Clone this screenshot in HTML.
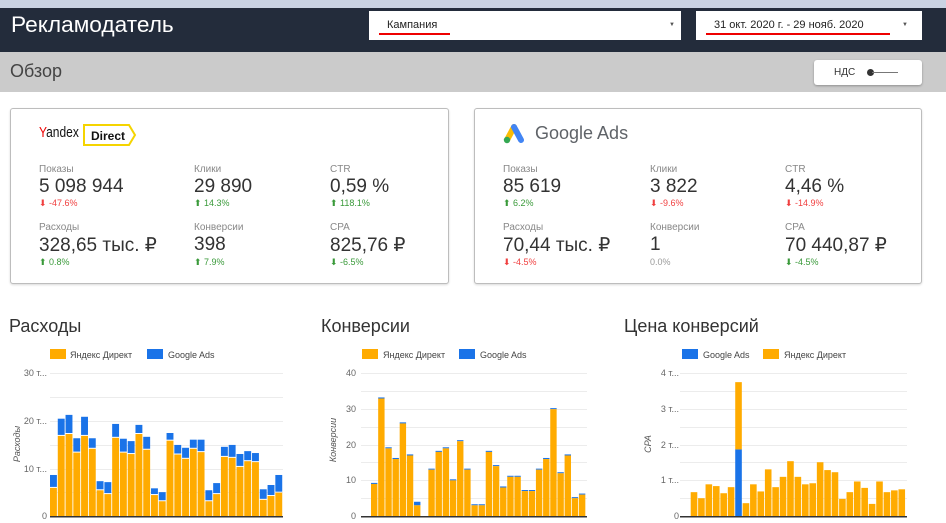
<!DOCTYPE html>
<html><head><meta charset="utf-8"><style>
*{margin:0;padding:0;box-sizing:border-box}
body{width:946px;height:523px;overflow:hidden;background:#fff;font-family:"Liberation Sans",sans-serif;position:relative;color:#333}
.abs{position:absolute}
.top{left:0;top:0;width:946px;height:8px;background:#c9d2e2}
.nav{left:0;top:8px;width:946px;height:44px;background:#232c3b}
.title{left:11px;top:12px;font-size:22px;color:#fff;transform:scaleX(1.03);transform-origin:left}
.dd{background:#fff;height:29px;top:11px;font-size:11px;color:#222}
.sub{left:0;top:52px;width:946px;height:40px;background:#cbcbcb}
.card{border:1px solid #bdbdbd;border-radius:3px;background:#fff;box-shadow:0 1px 2px rgba(0,0,0,.15)}
.lbl{font-size:10px;color:#888}
.val{font-size:19px;color:#333}
.ch{font-size:9px}
.up{color:#3a9a3a}.dn{color:#f04040}.nz{color:#999}
.ct{font-size:18px;color:#333;top:316px}
</style></head><body>
<div class="abs top"></div>
<div class="abs nav"></div>
<div class="abs title">Рекламодатель</div>
<div class="abs dd" style="left:369px;width:312px"><span class="abs" style="left:18px;top:8px">Кампания</span><div class="abs" style="left:10px;top:22px;width:71px;height:2px;background:#e00"></div><span class="abs" style="right:6px;top:11px;font-size:6px;color:#555">▼</span></div>
<div class="abs dd" style="left:696px;width:226px"><span class="abs" style="left:18px;top:8px">31 окт. 2020 г. - 29 нояб. 2020</span><div class="abs" style="left:10px;top:22px;width:184px;height:2px;background:#e00"></div><span class="abs" style="right:14px;top:11px;font-size:6px;color:#555">▼</span></div>
<div class="abs sub"></div>
<div class="abs" style="left:10px;top:61px;font-size:18px;color:#444">Обзор</div>
<div class="abs" style="left:814px;top:60px;width:108px;height:25px;background:#fff;border-radius:3px;box-shadow:0 1px 2px rgba(0,0,0,.3)"><span class="abs" style="left:20px;top:7px;font-size:10px;color:#333">НДС</span><div class="abs" style="left:53px;top:9px;width:7px;height:7px;border-radius:50%;background:#333"></div><div class="abs" style="left:58px;top:12px;width:26px;height:1px;background:#777"></div></div>

<div class="abs card" style="left:10px;top:108px;width:439px;height:176px">
 <div class="abs" style="left:28px;top:15px;font-size:15px;color:#111;transform:scaleX(.8);transform-origin:left"><span style="color:#e00">Y</span>andex</div>
 <div class="abs" style="left:72px;top:15px;width:46px;height:22px;border:2px solid #f5d400;border-right:none;font-size:12px;font-weight:bold;color:#111;padding:3px 0 0 6px">Direct</div>
 <svg class="abs" style="left:116px;top:15px" width="10" height="22"><path d="M0 1 L2 1 L8 11 L2 21 L0 21" fill="none" stroke="#f5d400" stroke-width="2"/></svg>
 <div class="abs lbl" style="left:28px;top:55px">Показы</div><div class="abs val" style="left:28px;top:67px">5 098 944</div><div class="abs ch dn" style="left:28px;top:89px">⬇ -47.6%</div>
 <div class="abs lbl" style="left:183px;top:55px">Клики</div><div class="abs val" style="left:183px;top:67px">29 890</div><div class="abs ch up" style="left:183px;top:89px">⬆ 14.3%</div>
 <div class="abs lbl" style="left:319px;top:55px">CTR</div><div class="abs val" style="left:319px;top:67px">0,59 %</div><div class="abs ch up" style="left:319px;top:89px">⬆ 118.1%</div>
 <div class="abs lbl" style="left:28px;top:113px">Расходы</div><div class="abs val" style="left:28px;top:125px">328,65 тыс. ₽</div><div class="abs ch up" style="left:28px;top:148px">⬆ 0.8%</div>
 <div class="abs lbl" style="left:183px;top:113px">Конверсии</div><div class="abs val" style="left:183px;top:125px">398</div><div class="abs ch up" style="left:183px;top:148px">⬆ 7.9%</div>
 <div class="abs lbl" style="left:319px;top:113px">CPA</div><div class="abs val" style="left:319px;top:125px">825,76 ₽</div><div class="abs ch up" style="left:319px;top:148px">⬇ -6.5%</div>
</div>

<div class="abs card" style="left:474px;top:108px;width:448px;height:176px">
 <svg class="abs" style="left:28px;top:13px" width="22" height="22"><path d="M4 18 L11 5" stroke="#fbbc04" stroke-width="6" stroke-linecap="round"/><path d="M11 5 L18 18" stroke="#4285f4" stroke-width="6" stroke-linecap="round"/><circle cx="4" cy="18" r="3.2" fill="#34a853"/></svg>
 <div class="abs" style="left:60px;top:14px;font-size:18px;color:#5f6368">Google Ads</div>
 <div class="abs lbl" style="left:28px;top:55px">Показы</div><div class="abs val" style="left:28px;top:67px">85 619</div><div class="abs ch up" style="left:28px;top:89px">⬆ 6.2%</div>
 <div class="abs lbl" style="left:175px;top:55px">Клики</div><div class="abs val" style="left:175px;top:67px">3 822</div><div class="abs ch dn" style="left:175px;top:89px">⬇ -9.6%</div>
 <div class="abs lbl" style="left:310px;top:55px">CTR</div><div class="abs val" style="left:310px;top:67px">4,46 %</div><div class="abs ch dn" style="left:310px;top:89px">⬇ -14.9%</div>
 <div class="abs lbl" style="left:28px;top:113px">Расходы</div><div class="abs val" style="left:28px;top:125px">70,44 тыс. ₽</div><div class="abs ch dn" style="left:28px;top:148px">⬇ -4.5%</div>
 <div class="abs lbl" style="left:175px;top:113px">Конверсии</div><div class="abs val" style="left:175px;top:125px">1</div><div class="abs ch nz" style="left:175px;top:148px">0.0%</div>
 <div class="abs lbl" style="left:310px;top:113px">CPA</div><div class="abs val" style="left:310px;top:125px">70 440,87 ₽</div><div class="abs ch up" style="left:310px;top:148px">⬇ -4.5%</div>
</div>

<div class="abs ct" style="left:9px">Расходы</div>
<div class="abs ct" style="left:321px">Конверсии</div>
<div class="abs ct" style="left:624px">Цена конверсий</div>

<svg class="abs" style="left:0;top:0" width="946" height="523" id="s">
<g font-family="Liberation Sans, sans-serif" font-size="9" fill="#444">
<rect x="50" y="349" width="16" height="10" fill="#ffab00"/><text x="70" y="358">Яндекс Директ</text>
<rect x="147" y="349" width="16" height="10" fill="#1a73e8"/><text x="168" y="358">Google Ads</text>
<rect x="362" y="349" width="16" height="10" fill="#ffab00"/><text x="383" y="358">Яндекс Директ</text>
<rect x="459" y="349" width="16" height="10" fill="#1a73e8"/><text x="480" y="358">Google Ads</text>
<rect x="682" y="349" width="16" height="10" fill="#1a73e8"/><text x="703" y="358">Google Ads</text>
<rect x="763" y="349" width="16" height="10" fill="#ffab00"/><text x="784" y="358">Яндекс Директ</text>
<g text-anchor="end" fill="#666">
<text x="47" y="376">30 т...</text><text x="47" y="424">20 т...</text><text x="47" y="472">10 т...</text><text x="47" y="519">0</text>
<text x="356" y="376">40</text><text x="356" y="412">30</text><text x="356" y="448">20</text><text x="356" y="483">10</text><text x="356" y="519">0</text>
<text x="679" y="376">4 т...</text><text x="679" y="412">3 т...</text><text x="679" y="448">2 т...</text><text x="679" y="483">1 т...</text><text x="679" y="519">0</text>
</g>
<text transform="translate(20,444) rotate(-90)" text-anchor="middle" fill="#555" font-style="italic">Расходы</text>
<text transform="translate(336,440) rotate(-90)" text-anchor="middle" fill="#555" font-style="italic">Конверсии</text>
<text transform="translate(651,444) rotate(-90)" text-anchor="middle" fill="#555" font-style="italic">CPA</text>
</g>
<g id="bars"></g>
</svg>
<script>
var g=document.getElementById('bars'),h='';
function R(x,y,w,hh,c){h+='<rect x="'+x.toFixed(2)+'" y="'+y.toFixed(2)+'" width="'+w.toFixed(2)+'" height="'+Math.max(0,hh).toFixed(2)+'" fill="'+c+'"/>';}
function grid(x0,x1,ys){ys.forEach(function(y){R(x0,y,x1-x0,1,'#ececec')});}
grid(50,283,[373,397,421,445,469,492]);grid(361,587,[373,391,409,427,445,462,480,498]);grid(680,907,[373,391,409,427,445,462,480,498]);
var a=[[6.1,8.6],[17,20.4],[17.4,21.2],[13.5,16.3],[17,20.8],[14.3,16.3],[5.6,7.3],[4.8,7.1],[16.6,19.3],[13.5,16.2],[13.2,15.7],[17.4,19.1],[14.1,16.6],[4.6,5.8],[3.3,5],[16,17.4],[13.1,14.9],[12.2,14.3],[14.3,16],[13.6,16],[3.3,5.4],[4.8,6.9],[12.6,14.5],[12.4,14.9],[10.5,13],[11.7,13.6],[11.5,13.2],[3.6,5.6],[4.4,6.5],[5.1,8.6]];
var B=516;
a.forEach(function(v,i){var x=50+i*7.77,w=6.9,s=4.77;R(x,B-v[1]*s,w,(v[1]-v[0])*s,'#1a73e8');R(x,B-v[0]*s+1,w,v[0]*s-1,'#ffab00');});
var b=[9,33,19,16,26,17,3,0,13,18,19,10,21,13,3,3,18,14,8,11,11,7,7,13,16,30,12,17,5,6];
b.forEach(function(v,i){if(!v)return;var x=371+i*7.17,w=6.4,s=3.56;var gv=i==6?1:0.3;R(x,B-(v+gv)*s,w,gv*s,'#1a73e8');R(x,B-v*s,w,v*s,'#ffab00');});
var c=[.67,.5,.89,.84,.64,.81,-1,.36,.89,.69,1.31,.81,1.1,1.54,1.1,.89,.92,1.51,1.29,1.23,.48,.67,.97,.79,.34,.97,.67,.72,.75];
c.forEach(function(v,i){var x=690.7+i*7.42,w=6.6,s=35.6;if(v<0){R(x,B-1.87*s,w,1.87*s,'#1a73e8');R(x,B-3.76*s,w,1.89*s,'#ffab00');}else R(x,B-v*s,w,v*s,'#ffab00');});
R(50,516,233,1.5,'#333');R(361,516,226,1.5,'#333');R(680,516,227,1.5,'#333');
g.innerHTML=h;
</script>
</body></html>
